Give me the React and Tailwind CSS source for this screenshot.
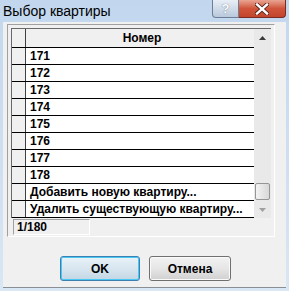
import React from "react";

const rows = ["171", "172", "173", "174", "175", "176", "177", "178", "Добавить новую квартиру...", "Удалить существующую квартиру..."];

const App = () => {
  return (
    <div className="w-[289px] h-[291px] bg-gradient-to-b from-[#c2d7ee] to-[#d9e6f4] flex flex-col font-['Liberation_Sans',Arial,sans-serif] text-black overflow-hidden">
      {/* title bar */}
      <div className="h-[22px] shrink-0 flex items-start justify-between pl-[3px]">
        <div className="text-[14px] leading-[22px] text-black">Выбор квартиры</div>
        <div className="flex mr-[3px]">
          <div className="w-[27px] h-[18px] rounded-bl-[4px] border border-t-0 border-[#6d7f97] bg-gradient-to-b from-[#e8eef6] to-[#b9c9dc] flex items-center justify-center text-[13px] font-bold text-white [text-shadow:0_0_1px_#44546a] leading-none">?</div>
          <div className="w-[47px] h-[18px] rounded-br-[4px] border border-t-0 border-l-0 border-[#7a2a1e] bg-gradient-to-b from-[#e8a493] via-[#d0543b] to-[#c3442c] flex items-center justify-center">
            <svg width="14" height="12" viewBox="0 0 14 12">
              <path d="M2 1.5 L12 10.5 M12 1.5 L2 10.5" stroke="#4b1a12" strokeWidth="4" strokeLinecap="square" />
              <path d="M2 1.5 L12 10.5 M12 1.5 L2 10.5" stroke="#fff" strokeWidth="2.4" strokeLinecap="square" />
            </svg>
          </div>
        </div>
      </div>

      {/* client area */}
      <div className="mx-[3px] flex-1 mb-[3px] bg-[#f0f0f0] border-b border-b-[#8a8f96] flex flex-col">
        <div className="ml-[4px] mt-[2px] w-[268px] h-[213px] border border-t-[#a0a0a0] border-l-[#a0a0a0] border-b-white border-r-white px-[3px] pt-[3px] flex flex-col">
          <div className="flex border-t border-l border-[#696969] h-[190px]">
            <div className="flex-1 flex flex-col">
              {/* header */}
              <div className="flex h-[19px] border-b border-black">
                <div className="w-[14px] bg-[#f0f0f0] border-r border-[#404040]" />
                <div className="flex-1 bg-[#f0f0f0] flex items-center justify-center text-[12px] font-bold pl-[4px] leading-none">Номер</div>
              </div>
              {rows.map((r, i) => (
                <div key={i} className="flex h-[17px] border-b border-black">
                  <div className="w-[14px] bg-[#f0f0f0] border-r border-[#404040]" />
                  <div className="flex-1 bg-white flex items-center pl-[4px] text-[12px] font-bold whitespace-nowrap overflow-hidden leading-none">{r}</div>
                </div>
              ))}
            </div>
            {/* scrollbar */}
            <div className="w-[17px] shrink-0 bg-[#e9e9e9] flex flex-col items-center">
              <div className="h-[17px] w-full flex items-center justify-center">
                <svg width="7" height="4" viewBox="0 0 7 4"><path d="M0 4 L3.5 0 L7 4 Z" fill="#3a3a3a" /></svg>
              </div>
              <div className="flex-1" />
              <div className="w-[15px] h-[17px] rounded-[2px] border border-[#959595] bg-gradient-to-r from-[#f3f3f3] to-[#d8d8d8] mb-[1px]" />
              <div className="h-[17px] w-full flex items-center justify-center">
                <svg width="7" height="4" viewBox="0 0 7 4"><path d="M0 0 L7 0 L3.5 4 Z" fill="#a0a0a0" /></svg>
              </div>
            </div>
          </div>
          {/* status */}
          <div className="mt-[1px] ml-[2px] w-[77px] h-[16px] border border-t-[#a0a0a0] border-l-[#a0a0a0] border-b-white border-r-white flex items-center pl-[3px] text-[12px] font-bold leading-none">1/180</div>
        </div>

        {/* buttons */}
        <div className="flex justify-center gap-[9px] mt-[19px] pl-[2px]">
          <button className="w-[80px] h-[25px] rounded-[3px] border border-[#3c7fb1] shadow-[inset_0_0_0_1px_#48c8f5] bg-gradient-to-b from-[#e9f2f8] via-[#d8e6f0] to-[#c3d6e4] text-[12px] font-bold">OK</button>
          <button className="w-[82px] h-[25px] rounded-[3px] border border-[#707070] shadow-[inset_0_0_0_1px_#fafafa] bg-gradient-to-b from-[#f2f2f2] via-[#e6e6e6] to-[#d0d0d0] text-[12px] font-bold">Отмена</button>
        </div>
      </div>
    </div>
  );
};

export default App;
